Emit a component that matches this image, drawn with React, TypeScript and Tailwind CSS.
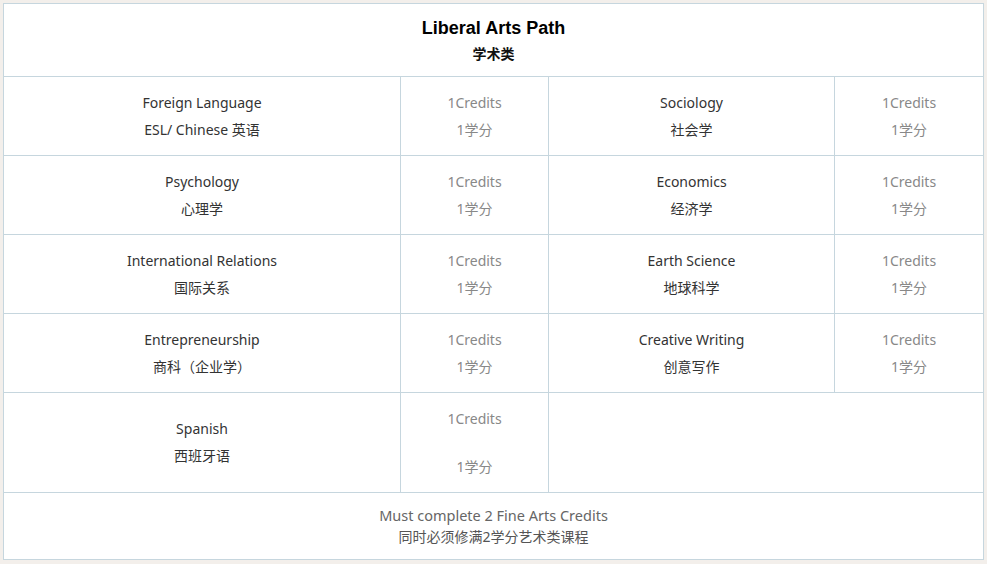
const courses = [
  { en: "Foreign Language", zh: "ESL/ Chinese 英语" },
  { en: "Sociology", zh: "社会学" },
  { en: "Psychology", zh: "心理学" },
  { en: "Economics", zh: "经济学" },
  { en: "International Relations", zh: "国际关系" },
  { en: "Earth Science", zh: "地球科学" },
  { en: "Entrepreneurship", zh: "商科（企业学）" },
  { en: "Creative Writing", zh: "创意写作" },
];

const body = { fontFamily: '"Noto Sans", "Noto Sans CJK SC", sans-serif' };

function Name({ en, zh }: { en: string; zh: string }) {
  return (
    <div className="flex flex-col items-center justify-center text-[14px] leading-[27px] text-[#333]">
      <span>{en}</span>
      <span>{zh}</span>
    </div>
  );
}

function Credits() {
  return (
    <div className="flex flex-col items-center justify-center text-[14px] leading-[27px] text-[#888]">
      <span>1Credits</span>
      <span>1学分</span>
    </div>
  );
}

export default function App() {
  const rows = [];
  for (let i = 0; i < courses.length; i += 2) rows.push([courses[i], courses[i + 1]]);

  return (
    <div className="w-[987px] h-[564px] bg-[#f3efeb] pt-[3px] pl-[3px]" style={body}>
      <div className="w-[981px] bg-white border border-[#c6d6de]">
        <div className="h-[73px] border-b border-[#c6d6de] flex flex-col items-center justify-center pt-[1px]">
          <div
            className="text-[18px] font-bold leading-[25px] text-black"
            style={{ fontFamily: '"Liberation Sans", Arial, sans-serif' }}
          >
            Liberal Arts Path
          </div>
          <div className="text-[14px] font-bold leading-[25px] text-[#111]">学术类</div>
        </div>

        {rows.map(([a, b]) => (
          <div
            key={a.en}
            className="grid grid-cols-[397px_148px_286px_148px] h-[79px] border-b border-[#c6d6de]"
          >
            <div className="border-r border-[#c6d6de] flex items-center justify-center">
              <Name {...a} />
            </div>
            <div className="border-r border-[#c6d6de] flex items-center justify-center">
              <Credits />
            </div>
            <div className="border-r border-[#c6d6de] flex items-center justify-center">
              <Name {...b} />
            </div>
            <div className="flex items-center justify-center">
              <Credits />
            </div>
          </div>
        ))}

        <div className="grid grid-cols-[397px_148px_434px] h-[100px] border-b border-[#c6d6de]">
          <div className="border-r border-[#c6d6de] flex items-center justify-center pb-[2px]">
            <Name en="Spanish" zh="西班牙语" />
          </div>
          <div className="border-r border-[#c6d6de] flex flex-col items-center justify-center text-[14px] leading-[24px] text-[#888]">
            <span>1Credits</span>
            <span>&nbsp;</span>
            <span>1学分</span>
          </div>
          <div />
        </div>

        <div className="h-[66px] flex flex-col items-center justify-center">
          <span className="text-[14.5px] leading-[21px] text-[#666]">Must complete 2 Fine Arts Credits</span>
          <span className="text-[14px] leading-[21px] text-[#555]">同时必须修满2学分艺术类课程</span>
        </div>
      </div>
    </div>
  );
}
